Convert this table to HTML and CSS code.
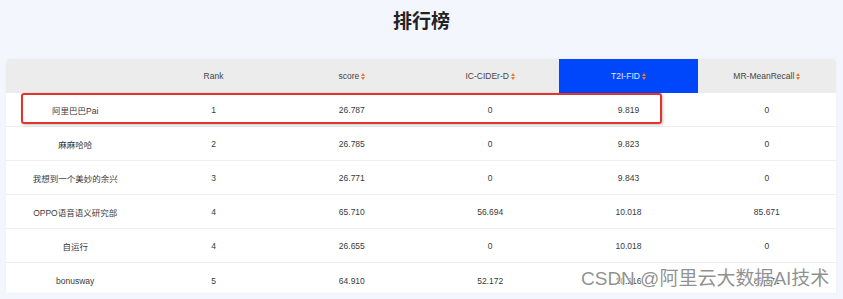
FILE: index.html
```html
<!DOCTYPE html>
<html lang="zh">
<head>
<meta charset="utf-8">
<title>排行榜</title>
<link rel="stylesheet" href="styles.css">
</head>
<body>
<div class="page">
  <h1 class="title">排行榜</h1>
  <div class="card">
    <div class="row head">
      <div class="cell"></div>
      <div class="cell">Rank</div>
      <div class="cell">score<span class="sort"></span></div>
      <div class="cell">IC-CIDEr-D<span class="sort"></span></div>
      <div class="cell active">T2I-FID<span class="sort"></span></div>
      <div class="cell">MR-MeanRecall<span class="sort"></span></div>
    </div>
    <div class="row"><div class="cell">阿里巴巴Pai</div><div class="cell">1</div><div class="cell">26.787</div><div class="cell">0</div><div class="cell">9.819</div><div class="cell">0</div></div>
    <div class="row"><div class="cell">麻麻哈哈</div><div class="cell">2</div><div class="cell">26.785</div><div class="cell">0</div><div class="cell">9.823</div><div class="cell">0</div></div>
    <div class="row"><div class="cell">我想到一个美妙的余兴</div><div class="cell">3</div><div class="cell">26.771</div><div class="cell">0</div><div class="cell">9.843</div><div class="cell">0</div></div>
    <div class="row"><div class="cell">OPPO语音语义研究部</div><div class="cell">4</div><div class="cell">65.710</div><div class="cell">56.694</div><div class="cell">10.018</div><div class="cell">85.671</div></div>
    <div class="row"><div class="cell">自运行</div><div class="cell">4</div><div class="cell">26.655</div><div class="cell">0</div><div class="cell">10.018</div><div class="cell">0</div></div>
    <div class="row last"><div class="cell">bonusway</div><div class="cell">5</div><div class="cell">64.910</div><div class="cell">52.172</div><div class="cell">10.216</div><div class="cell">85.671</div></div>
    <div class="highlight"></div>
  </div>
  <div class="watermark">CSDN @阿里云大数据AI技术</div>
</div>
</body>
</html>
```
FILE: styles.css
```css
* { box-sizing: border-box; margin: 0; padding: 0; }
html, body { width: 843px; height: 299px; overflow: hidden; }
body {
  background: #f3f6fc;
  font-family: "Liberation Sans", "Noto Sans CJK SC", sans-serif;
  color: #3a3a3a;
}
.page {
  position: relative;
  height: 299px;
  padding: 0 7px 0 6px;
}
.title {
  font-family: "Noto Sans CJK SC", sans-serif;
  font-size: 19px;
  font-weight: 700;
  color: #222;
  text-align: center;
  line-height: 28px;
  padding-top: 6px;
  height: 59px;
  padding-left: 1px;
}
.card {
  position: relative;
  background: #fff;
  border-radius: 4px 4px 0 0;
  box-shadow: 0 0 3px rgba(0, 0, 0, 0.04);
}
.row {
  display: grid;
  grid-template-columns: repeat(6, 1fr);
  height: 34px;
  border-bottom: 1px solid #eeeeee;
  font-size: 8.5px;
}
.row.head {
  background: #ececec;
  border-bottom: none;
  border-radius: 4px 4px 0 0;
  color: #444;
}
.row.last { height: 30px; border-bottom: none; }
.row.last .cell { padding-top: 5px; }
.cell {
  display: flex;
  align-items: center;
  justify-content: center;
  white-space: nowrap;
}
.head .cell.active {
  background: #0047fb;
  color: #e4ecff;
}
.sort {
  display: inline-flex;
  flex-direction: column;
  gap: 1px;
  margin-left: 2px;
}
.sort::before, .sort::after {
  content: "";
  width: 0;
  height: 0;
  border-left: 2.5px solid transparent;
  border-right: 2.5px solid transparent;
}
.sort::before { border-bottom: 3px solid #f0772a; }
.sort::after { border-top: 3px solid #f0772a; }
.highlight {
  position: absolute;
  left: 15px;
  top: 34px;
  width: 641px;
  height: 31px;
  border: 2px solid #e3332d;
  border-radius: 3px;
  box-shadow: 1px 1px 3px rgba(0, 0, 0, 0.25);
}
.watermark {
  position: absolute;
  left: 581px;
  top: 267px;
  font-family: "Liberation Sans", "Noto Sans CJK SC", sans-serif;
  font-size: 19px;
  line-height: 24px;
  color: rgba(125, 125, 125, 0.85);
  text-shadow: 0 0 2px #fff, 0 0 2px #fff, 0 0 1px #fff;
  white-space: nowrap;
}
```
